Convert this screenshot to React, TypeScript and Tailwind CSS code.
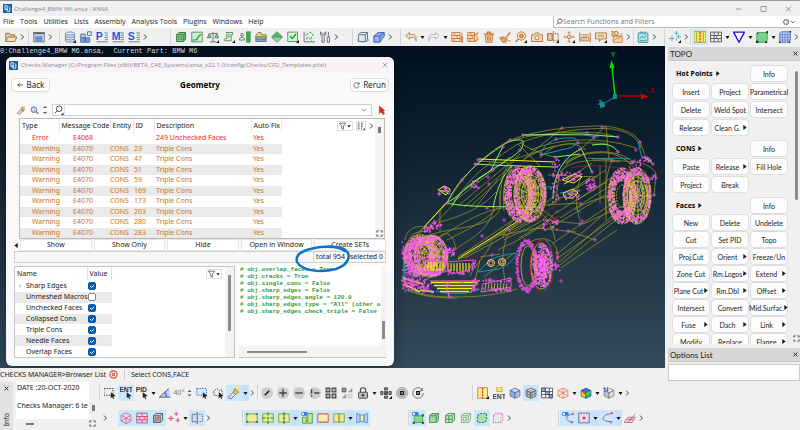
import type { ReactNode } from "react";

// ---------- small building blocks ----------

const Svg = ({ children }: { children: ReactNode }) => (
  <svg viewBox="0 0 16 16" className="block size-3" fill="none" stroke="#666" strokeWidth="1.2">
    {children}
  </svg>
);

const cubeFaces = (top: string, left: string, right: string, line = "#56657c") => (
  <g stroke={line} strokeWidth="1">
    <path d="M1.5 4.500l6.500-3 6.500 3L8 8z" fill={top} />
    <path d="M1.500 4.500L8 8v7l-6.500-3z" fill={left} />
    <path d="M14.500 4.500L8 8v7l6.500-3z" fill={right} />
  </g>
);

const softBox = (fill: string, line: string, extra?: ReactNode) => (
  <g stroke={line} strokeWidth="1.2">
    <path d="M2 5l3-3h9v9l-3 3H2z" fill={fill} />
    <path d="M2 5h9v9M11 5l3-3" />
    {extra}
  </g>
);

const yellowPlate = (extra?: ReactNode) => (
  <g>
    <rect x="1" y="2.500" width="14" height="11" fill="#f0ea94" stroke="#7fae55" strokeWidth="1.400" />
    {extra}
  </g>
);

const corner = <path d="M16 16h-4l4-4z" fill="#111" stroke="none" />;

const toggle = (
  <g stroke="none">
    <rect x="0" y="0" width="9" height="5" rx="2.500" fill="#2f7af0" />
    <circle cx="2.700" cy="2.500" r="1.500" fill="#fff" />
  </g>
);

const pointer = <path d="M9 7l6.500 5-3 .5 1 3-1.500.5-1-3-2 2z" fill="#222" stroke="none" />;

const letter = (text: string, color: string) => (
  <g>
    <text x="-.5" y="12" fontSize="14" fontWeight="900" fontFamily="Liberation Sans, sans-serif" fill={color} stroke="none">
      {text}
    </text>
    <path d="M11 2.500h5M12 5.500h4M11 8.500h5M12 11.500h4M1 14.500h15" stroke="#777" />
  </g>
);

const disc = (extra: ReactNode) => (
  <g>
    <circle cx="8" cy="8" r="8" fill="#cdcdcd" stroke="none" />
    {extra}
  </g>
);

const glyphs: Record<string, ReactNode> = {
  folder: (
    <g stroke="#94703f">
      <path d="M1 14V3h5l1.500 2H13v3" fill="#e9c79a" />
      <path d="M1 14l3-6h12l-3 6z" fill="#f7dfbd" />
    </g>
  ),
  sheet: (
    <g>
      <rect x="1" y="2" width="14" height="12.500" fill="#e8eefb" />
      <path d="M1 3.500h14" strokeWidth="2" />
      <path d="M5 7h7v6H5z" fill="#7ba1ee" stroke="#4a74c4" />
      <path d="M5 10h7M3 6v8" stroke="#4a74c4" />
    </g>
  ),
  database: (
    <g stroke="#6a7d9f">
      <path d="M2 3v10c0 2.500 12 2.500 12 0V3" fill="#dbe7fa" />
      <ellipse cx="8" cy="3.300" rx="6" ry="2" fill="#f3f7ff" />
      <path d="M2 6.500c0 2.500 12 2.500 12 0M2 10c0 2.500 12 2.500 12 0" />
      {corner}
    </g>
  ),
  blocks: (
    <g stroke="#5a6c90">
      <path d="M10 1h5v5h-5z" fill="#dfe8fa" />
      <path d="M1 4h6v5H1z" fill="#b5ccf8" />
      <path d="M1 9h6v6H1zM7 9h6v6H7z" fill="#6f9bf2" />
    </g>
  ),
  p: letter("P", "#2855e0"),
  m: letter("M", "#2855e0"),
  s: letter("S", "#2855e0"),
  mesh: softBox("#a7e3a7", "#2a7a3a", <path d="M5 5v9M8 5v9M2 8h9M2 11h9M5 5l3-3M8 5l3-3M12.500 4v9" strokeWidth=".8" />),
  curve: (
    <g>
      <rect x="1" y="1.500" width="14" height="13" fill="#c9efd0" stroke="#5a8a64" />
      <path d="M2 12h4c4 0 2-7 8-7" stroke="#13963a" strokeWidth="1.600" />
    </g>
  ),
  scale: (
    <g>
      <path d="M8 1v13M4 14.500h8M2 4l12-1" />
      <path d="M3 4L.5 9h5zM13 3.500L10.500 9h5z" fill="#9bdca8" stroke="#477a50" />
      {corner}
    </g>
  ),
  scroll: (
    <g stroke="#5a8a62">
      <path d="M4 2h9v3h-2v8H3c-2 0-2-3 0-3h2V3" fill="#d6f2da" />
      <path d="M6.500 5h3M6.500 7.500h3" />
      {corner}
    </g>
  ),
  people: (
    <g>
      <circle cx="4" cy="5" r="1.800" />
      <path d="M.5 12c0-5 7-5 7 0z" />
      <path d="M10 1h5v4h-5zM10 6h5v4h-5zM10 11h5v4h-5z" fill="#39b54a" stroke="#1d7a2c" strokeWidth=".8" />
    </g>
  ),
  stack: (
    <g strokeWidth="1">
      <path d="M1 6l3-4h4v3h7v3H1z" fill="#f3db62" />
      <path d="M1 8h14v3H1z" fill="#8fd49a" />
      <path d="M1 11h14v3H1z" fill="#79a7ef" />
    </g>
  ),
  diamond: (
    <g stroke="#5b9b67">
      <path d="M8 1l7 6.500H1z" fill="#4dbb66" />
      <path d="M8 15l7-6.500H1z" fill="#8fd49c" />
    </g>
  ),
  check: (
    <g>
      <rect x="1" y="1.500" width="13" height="12.500" fill="#d5f3da" stroke="#5a8a64" />
      <path d="M4 7l3 3 5-6" stroke="#0fa02f" strokeWidth="1.800" />
      {corner}
    </g>
  ),
  scatter: (
    <g>
      <path d="M1.500 1v13.500H16" />
      <path d="M3 5l9 8" stroke="#5fbe73" />
      <path d="M5 3h2v2H5zM9 1h2v2H9zM12 4h2v2h-2zM10 8h2v2h-2zM4 9h2v2H4z" fill="#2fae49" stroke="none" />
    </g>
  ),
  tools: <path d="M2 1v4l2 2v8h3V7l2-2V1L7 3v2H4V3zM12.500 1v7M11 8h3v7h-3z" fill="#eee" />,
  boxOn: (
    <g>
      <ellipse cx="8" cy="12" rx="8" ry="3.500" fill="#8eb1fa" stroke="none" />
      {softBox("#e4e8ee", "#5f6f88")}
    </g>
  ),
  prism: (
    <g stroke="#44609c">
      <path d="M1 7l6-5h8v5l-6 8H1z" fill="#7fa6f4" />
      <path d="M1 7h8v8M9 7l6-5" fill="#a3bff7" />
    </g>
  ),
  undo: <path d="M1 6l5-4v2.500h4c5 0 5 4 5 9-2-5-3-5-5-5H6V11z" fill="#f6dfbd" stroke="#a98350" />,
  redo: <path d="M15 6l-5-4v2.500H6c-5 0-5 4-5 9 2-5 3-5 5-5h4V11z" fill="#e9e9e9" stroke="#b4b4b4" />,
  wall: (
    <g stroke="#c47c3a">
      <path d="M1 2h11v12H1z" fill="#fbe3c8" />
      <path d="M1 6h11M1 10h11M5 2v4M8 6v4M4 10v4" />
      <path d="M14.500 2v6M13.500 8h2v7h-2z" fill="#f1a050" />
    </g>
  ),
  wallCheck: (
    <g stroke="#c47c3a">
      <path d="M1 2h9v12H1z" fill="#fbe3c8" />
      <path d="M1 6h9M1 10h9M5 2v4M7 6v4M4 10v4" />
      <path d="M9 4l2 2 4-4M9 12l2 2 4-4M12 8h3" stroke="#ee7a12" strokeWidth="1.600" />
    </g>
  ),
  trash: (
    <g stroke="#bf6f2c">
      <path d="M3 5h10l-1 10H4z" fill="#f7cfa4" />
      <path d="M1 4h14M6 4V1.500h4V4M6.500 7v6M9.500 7v6" strokeWidth="1.500" />
    </g>
  ),
  broom: (
    <g stroke="#b8702f">
      <path d="M15 2l-5 6" strokeWidth="1.600" />
      <path d="M1 9l5-1 5 2-2 5H5z" fill="#f6b878" />
      <path d="M3 12l4-3M6 14l3-4M12 13h3" />
    </g>
  ),
  magnify: (
    <g stroke="#b07840">
      <circle cx="8.500" cy="6.500" r="5.500" fill="#fde4c4" />
      <circle cx="8.500" cy="6.500" r="2.500" fill="#f09a3a" />
      <path d="M4.500 10.500L1 14.500" strokeWidth="2" />
      {corner}
    </g>
  ),
  camera: (
    <g stroke="#a47440">
      <path d="M.7 5h4l1-2.500h4.600l1 2.500h4v9H.7z" fill="#f8dcb8" />
      <circle cx="8" cy="9" r="2.800" fill="#fff3e0" />
    </g>
  ),
  split: (
    <g stroke="#8b6a44">
      <path d="M.7 3.500H7v9H.7z" fill="#f5c48e" />
      <path d="M8.500 0v15" stroke="#e07820" />
      <path d="M10 3.500h5v9h-5" strokeDasharray="2 1" />
      {corner}
    </g>
  ),
  move: (
    <g stroke="#d87a28">
      <circle cx="8" cy="8" r="2.500" fill="#fbe0bd" stroke="#777" />
      <path d="M8 1v4M8 11v4M1 8h4M11 8h4M6 3l2-2 2 2M6 13l2 2 2-2M3 6L1 8l2 2M13 6l2 2-2 2" />
      {corner}
    </g>
  ),
  ruler: (
    <g stroke="#b8824f">
      <path d="M1 2v13M15 2v13M3 5h10" strokeWidth="1.500" />
      <path d="M3 8h10v5H3z" fill="#f7d5aa" />
      <path d="M6 8v2M8 8v3M10 8v2" />
    </g>
  ),
  note: (
    <g stroke="#a4784a">
      <path d="M.7 2.500h14.600v8H8l-2 3.500v-3.500H.7z" fill="#f9dcb5" />
      <path d="M4 6.500h8" strokeDasharray="2 1" strokeWidth="1.600" />
      {corner}
    </g>
  ),
  threeD: (
    <g stroke="#c47a30">
      <path d="M3 7h12v8H3z" fill="#f8dcb6" />
      <path d="M4 13l4-4 2 2 5-8" />
      <text x="-1" y="7" fontSize="9" fontWeight="700" fontFamily="Liberation Sans, sans-serif" fill="#c0711f" stroke="none">
        3D
      </text>
    </g>
  ),
  clipboard: (
    <g stroke="#3c8c94">
      <rect x="1.500" y="2.500" width="13" height="13" rx="1" fill="#a6e4e8" />
      <path d="M5 .5v3M8 .5v3M11 .5v3M4 10l3-3 2 2 3-3M4 13h8" />
    </g>
  ),
  points: (
    <g stroke="#2ca3a8" strokeDasharray="3 1">
      <path d="M4 6v8M0 10h8M10 0v6M7 3h6M13 5v5M10 8h6M10 10v4" />
      {corner}
    </g>
  ),
  yellowSplit: (
    <g>
      <rect x="0" y="1" width="16" height="14" fill="#f2f06c" stroke="#b88a3a" />
      <path d="M8 1v14" stroke="#c33" strokeDasharray="3 1" strokeWidth="1.500" />
      <path d="M3.500 2v12M12.500 2v12" stroke="#79b23b" />
    </g>
  ),
  table: <path d="M.7 1.500h14.600v13H.7zM.7 6h14.600M.7 10h14.600M5.500 1.500v13M11 1.500V6M8.500 6v4M11 10v4.500" stroke="#555" />,
  triangle: <path d="M.8 1.500h14.400L8 15z" fill="#fff" stroke="#1515e8" strokeWidth="1.800" />,
  greenQuad: (
    <g>
      <path d="M3 2h12v11l-2 2H1V4z" fill="#7ccf8b" stroke="#4d9a5c" />
      <path d="M0 13h3v3H0zM14 0h2v3h-2zM1 2h2v2H1zM12 14h3v2h-3z" fill="#222" stroke="none" />
    </g>
  ),
  blueMesh: (
    <g stroke="#4a6fbe">
      <path d="M3 1h12v12l-2 2H1V3z" fill="#c0d4fa" />
      <path d="M4.500 2v13M8 2v13M11.500 2v13M1 5h14M1 8.500h14M1 12h14" strokeWidth=".8" />
      <path d="M0 14h2v2H0zM14 0h2v2h-2zM13 14h2v2h-2z" fill="#222" stroke="none" />
    </g>
  ),
  pick: (
    <g>
      <rect x="0" y="2" width="12" height="9" strokeDasharray="2 1.500" stroke="#333" />
      {pointer}
    </g>
  ),
  pickBlue: (
    <g>
      <rect x="1" y="2" width="13" height="9" fill="#dbe9ff" strokeDasharray="2 1.500" stroke="#2b62c9" />
      {pointer}
    </g>
  ),
  lasso: (
    <g>
      <path d="M2 6l4-4 4 3 3-2 1 6-5 3-6-1z" strokeDasharray="2 1.200" stroke="#444" />
      {pointer}
    </g>
  ),
  ent: (
    <g>
      <text x="-1" y="6" fontSize="9" fontWeight="700" fontFamily="Liberation Sans, sans-serif" fill="#333" stroke="none">
        ENT
      </text>
      {pointer}
    </g>
  ),
  pid: (
    <g>
      <text x="-.5" y="6" fontSize="9" fontWeight="700" fontFamily="Liberation Sans, sans-serif" fill="#333" stroke="none">
        PID
      </text>
      {pointer}
    </g>
  ),
  angle: (
    <g>
      <path d="M1 13L14 2v11z" fill="#b9d0fb" stroke="none" />
      <path d="M0 13.500h15M1 13L13 2" stroke="#444" />
      <path d="M10 13c0-4-1-5-3-6" stroke="#2b62e9" strokeWidth="1.500" />
    </g>
  ),
  flashlight: (
    <g>
      <path d="M0 14l7-7 3 3-6 6z" fill="#d9e2ee" stroke="#666" />
      <path d="M7 7l2-5 5 5-4 3z" fill="#e9c84e" stroke="#777" />
      <path d="M9 0l7 0v7z" fill="#ffe94a" stroke="none" />
    </g>
  ),
  dotPen: disc(<path d="M5 11l6-6" stroke="#222" strokeWidth="2.200" />),
  dotPlus: disc(<path d="M3 8h10M8 3v10" stroke="#444" strokeWidth="1.800" />),
  dotMinus: disc(<path d="M3 8h10" stroke="#444" strokeWidth="1.800" />),
  dotNot: disc(<path d="M7 8h7M3.500 3v6M3.500 11v2" stroke="#444" strokeWidth="1.800" />),
  quads: <path d="M1.500 1.500h5v5h-5zM9.500 1.500h5v5h-5zM1.500 9.500h5v5h-5zM9.500 9.500h5v5h-5z" fill="#bbb" stroke="#444" strokeWidth="1.500" />,
  quadsHalf: (
    <g>
      <path d="M1.500 1.500h5v5h-5z" fill="#999" stroke="#555" />
      <path d="M9 7l6-6v6zM1 15l6-6v6z" fill="#999" stroke="none" />
      <path d="M9.500 9.500h5v5h-5z" fill="#ddd" stroke="#ccc" />
    </g>
  ),
  lock: (
    <g stroke="#444">
      <path d="M4.500 7V4c0-4 7-4 7 0v3" strokeWidth="1.500" />
      <rect x="2" y="7" width="12" height="8" rx="1" fill="#bbb" />
      <circle cx="8" cy="11" r="1.300" fill="#222" />
    </g>
  ),
  cross: (
    <g stroke="#444">
      <path d="M6 6h4v4H6z" fill="#555" />
      <path d="M6 1h4v3H6zM6 12h4v3H6zM1 6h3v4H1zM12 6h3v4h-3z" fill="#999" />
      {corner}
    </g>
  ),
  target: (
    <g>
      <circle cx="8" cy="8" r="7.500" fill="#c8ccd1" stroke="#a4a9af" />
      <circle cx="8" cy="8" r="4.800" stroke="#8c9299" />
      <path d="M6.200 6.200h3.600v3.600H6.200z" fill="#ddd" stroke="#111" strokeWidth="1.600" />
    </g>
  ),
  turn: (
    <g>
      <circle cx="8" cy="8" r="7" stroke="#666" strokeDasharray="38 6" />
      <path d="M6.200 6.200h3.600v3.600H6.200z" stroke="#111" strokeWidth="1.600" />
      <path d="M13.500 1v4h-3" stroke="#444" />
    </g>
  ),
  yellowCorner: (
    <g>
      <rect x="1" y="1" width="13" height="14" fill="#fdee86" stroke="#b87f50" />
      <path d="M7.500 1v14" stroke="#d22" strokeDasharray="3 1" strokeWidth="1.300" />
      {corner}
    </g>
  ),
  entPlate: (
    <g>
      <rect x="5" y="0" width="7" height="6" fill="#f5e47a" stroke="#c7a93a" />
      <text x="-1" y="16" fontSize="9" fontWeight="700" fontFamily="Liberation Sans, sans-serif" fill="#444" stroke="none">
        ENT
      </text>
    </g>
  ),
  cubeBlue: cubeFaces("#c3d5f8", "#8fb0f0", "#abc4f6"),
  cubeMesh: (
    <g>
      {cubeFaces("#fff", "#dbe6f5", "#eef3fa", "#444")}
      <path d="M4.500 3l6.500 3.500M11.500 3L5 6.500M3.500 5.500v7.500M5.800 6.800v7M10.200 6.800v7M12.500 5.500V13M1.500 8.500l6.500 3 6.500-3" stroke="#555" strokeWidth=".8" />
    </g>
  ),
  meshBlue: (
    <g stroke="#555">
      <path d="M.7 1.500h14.600v13H.7z" fill="#fff" />
      <path d="M.7 1.500h5v4.500h-5zM6 6h5v4H6zM11 10h4v4.500h-4z" fill="#85a8ec" />
      <path d="M.7 6h14.600M.7 10h14.600M6 1.500v13M11 1.500v13" />
    </g>
  ),
  wireRed: (
    <path
      d="M1.500 4.500l6.500-3 6.500 3L8 8zM1.500 4.500v7.500L8 15V8M14.500 4.500V12L8 15M1.500 12L8 8l6.500 4M8 1.500V8"
      stroke="#e8705c"
      strokeWidth="1"
    />
  ),
  rainbow: (
    <g>
      {cubeFaces("#2a6ff0", "#f5d21e", "#1fb07a", "#2c4f8a")}
      <path d="M1.500 4.500L8 8v4z" fill="#ef3b24" stroke="none" />
      <path d="M14.500 4.500L8 8l1 6z" fill="#48d64c" stroke="none" />
    </g>
  ),
  cubeGray: (
    <g>
      {cubeFaces("#f2f2f2", "#c4c4c4", "#ddd", "#777")}
      <path d="M2 0v7M6 0v6M0 2h4M4 5h4" stroke="#3a6fe0" />
    </g>
  ),
  pinkCube: (
    <g stroke="#8d6d9a" strokeWidth="1">
      <path d="M1.500 4.500l6.500-3.500 6.500 3.500v7.500L8 15.500 1.500 12z" fill="#f1d3e6" />
      <path d="M1.500 4.500L8 8l6.500-3.500M8 8v7.500M1.500 12L8 8l6.500 4" stroke="#cf5a90" />
    </g>
  ),
  pinkGrid: (
    <g stroke="#7b6884">
      <path d="M1 1.500h14v13H1z" fill="#f4d6e6" />
      <path d="M1 6h14M1 10.500h14M8 1.500V6M5 6v4.500M11 6v4.500M8 10.500v4" stroke="#d8437a" />
    </g>
  ),
  pinkMesh: (
    <g>
      {softBox("#e8d8e6", "#555", <path d="M5 5v9M8 5v9M2 8h9M2 11h9" strokeWidth=".8" />)}
      <path d="M3 13l7-7" stroke="#e0467e" />
    </g>
  ),
  pinkPlus: <path d="M4 5v7M.5 8.500h7M11 0v5M8.500 2.500h5M13 8v6M10 11h6" stroke="#e84e88" strokeWidth="1.500" />,
  halfBox: (
    <g>
      <path d="M8 3H1.500v10H8" fill="#cfdcf5" stroke="#5b6b8c" />
      <path d="M8.500 0v16" stroke="#e8487f" strokeWidth="1.500" />
      <path d="M10.500 3H15v10h-4.500" strokeDasharray="2 1.200" />
    </g>
  ),
  plate: yellowPlate(<path d="M0 1.500h3v2.500H0zM13 1.500h3v2.500h-3zM0 12h3v2.500H0zM13 12h3v2.500h-3z" fill="#398c3c" stroke="none" />),
  platePlus: yellowPlate(<path d="M8 0v5M8 11v5M0 8h5M11 8h5M6.500 8h3M8 6.500v3" stroke="#2d9b35" strokeWidth="1.500" />),
  plateDots: yellowPlate(<path d="M8 0v16M6.500 2.500h3M6.500 8h3M6.500 13.500h3" stroke="#3a7a36" />),
  plateToggle: (
    <g>
      <path d="M2 7h5v8H2zM9 2h6v13H9z" fill="#c9e98a" stroke="#4e9a3a" />
      {toggle}
    </g>
  ),
  plateRed: <rect x="1" y="2.500" width="14" height="11" rx="1" fill="#f6efb4" stroke="#dd6050" strokeWidth="1.500" />,
  plateSplit: yellowPlate(<path d="M8 2v12" stroke="#7b7b2a" strokeWidth="1.500" />),
  plateBlue: (
    <g stroke="#5b86cc">
      <path d="M1 1.500L5.500 4v9L1 14.500zM15 1.500L10.500 4v9l4.500 1.500z" fill="#bcd4f8" />
      <path d="M5.500 4h5v9h-5z" fill="#f4ec9a" />
    </g>
  ),
  greenToggle: (
    <g>
      <path d="M3 5h11v9H3z" fill="#8ad39a" stroke="#3f9858" />
      <path d="M1 13h3v3H1zM13 13h3v3h-3zM13 3h3v3h-3z" fill="#1e7a36" stroke="none" />
      {toggle}
    </g>
  ),
  greenBox: softBox("#9bd6a6", "#4d8d5a"),
  greenBoxGrid: softBox("#c6ebcc", "#4d8d5a", <path d="M6.500 5v9M2 9.500h9" stroke="#1f9a38" />),
  greenBoxLine: softBox("#e0f2e3", "#7daa86", <path d="M4.500 7.500h4v4h-4z" />),
  greenDash: <path d="M2 5l3-3h9v9l-3 3H2z" fill="#a6dfb0" stroke="#3a8c50" strokeDasharray="3 1.500" strokeWidth="1.600" />,
  pinkDash: <path d="M2 5l3-3h9v9l-3 3H2z" fill="#dff3dd" stroke="#e86fd8" strokeDasharray="2 1.500" strokeWidth="1.800" />,
  arcToggle: (
    <g>
      <path d="M14 3C6 4 2 9 11 13" stroke="#7d6a9a" />
      <path d="M11 12h4v3h-4zM13 1h3v3h-3z" fill="#d86a94" stroke="none" />
      {toggle}
    </g>
  ),
  pinBox: (
    <g>
      <rect x="1" y="1.500" width="14" height="13" fill="#e6d8ea" stroke="#6c7088" />
      <circle cx="8" cy="8" r="1.800" fill="#d8285a" stroke="none" />
    </g>
  ),
  arc: (
    <g>
      <path d="M14 2C4 3-1 9 6 12l8 1" stroke="#7d5f8a" />
      <path d="M13 0h3v3h-3zM12 12h3v3h-3z" fill="#e0608a" stroke="none" />
    </g>
  ),
  slant: <path d="M0 14l5-7h10l-4 7zM5 14l5-7M3 10h10M15 2L8 12" fill="#f8dbe2" stroke="#b86078" strokeWidth="1" />,
};

const Chevron = () => (
  <svg viewBox="0 0 7 14" className="block h-[14px] w-[7px] shrink-0" fill="none" stroke="#444">
    <path d="M2 4.500l2.500 2.500L2 9.500" />
  </svg>
);

const Drop = () => (
  <svg viewBox="0 0 7 14" className="block h-[14px] w-[7px] shrink-0">
    <path d="M1.500 6h4l-2 3z" fill="#111" />
  </svg>
);

// "names" takes glyph names, ">" for the overflow mark, "v" for a menu arrow; a leading * marks an active tool
const Tools = ({ names }: { names: string }) => (
  <>
    {names.split(" ").map((raw, i) => {
      if (raw === ">") return <Chevron key={i} />;
      if (raw === "v") return <Drop key={i} />;
      if (raw === "*v")
        return (
          <span key={i} className="flex h-4 items-center bg-[#c5e1f7]">
            <Drop />
          </span>
        );
      const active = raw.startsWith("*");
      const name = active ? raw.slice(1) : raw;
      return (
        <button
          key={i}
          type="button"
          aria-label={name}
          className={`flex size-4 shrink-0 items-center justify-center ${active ? "bg-[#cce6fa]" : ""}`}
        >
          <Svg>{glyphs[name]}</Svg>
        </button>
      );
    })}
  </>
);

const Separator = ({ className = "" }: { className?: string }) => (
  <span className={`h-4 w-px shrink-0 bg-[#d4d4d4] ${className}`} />
);

const AnsaLogo = () => (
  <svg viewBox="0 0 16 16" className="size-[9px] shrink-0">
    <rect width="16" height="16" fill="#1261b0" />
    <path d="M3.500 3v7h4V3zM7.500 7v6H12V6l-2-2" fill="none" stroke="#fff" strokeWidth="1.500" />
  </svg>
);

const Corners = () => (
  <svg viewBox="0 0 8 8" className="block size-[7px]" fill="none" stroke="#444">
    <path d="M1 3V1h2M5 1h2v2M7 5v2H5M3 7H1V5" />
  </svg>
);

const Funnel = () => (
  <svg viewBox="0 0 16 10" className="block h-[10px] w-4 rounded-[1px] border border-[#ddd] bg-white" fill="none" stroke="#555">
    <path d="M1 1.500h8L6 5v4L4 8V5z" />
    <path d="M11 4h4l-2 3z" fill="#111" stroke="none" />
  </svg>
);

const Arrow = ({ className = "" }: { className?: string }) => (
  <svg viewBox="0 0 4 6" className={`h-[5px] w-1 shrink-0 ${className}`}>
    <path d="M0 0v6l4-3z" fill="#111" />
  </svg>
);

// ---------- 3D view ----------

const makeRandom = (seed: number) => {
  let s = seed;
  return () => {
    s = (s * 16807) % 2147483647;
    return s / 2147483647;
  };
};

const plus = (x: number, y: number, r: number) =>
  `M${(x - r).toFixed(1)} ${y.toFixed(1)}h${2 * r}M${x.toFixed(1)} ${(y - r).toFixed(1)}v${2 * r}`;

// random points in the ring between two ellipses
const ringMarks = (cx: number, cy: number, rx: number, ry: number, inner: number, count: number, seed: number) => {
  const rnd = makeRandom(seed);
  let d = "";
  for (let i = 0; i < count; i++) {
    const a = rnd() * Math.PI * 2;
    const k = inner + (1 - inner) * rnd();
    d += plus(cx + Math.cos(a) * rx * k, cy + Math.sin(a) * ry * k, 1);
  }
  return d;
};

type WheelProps = { cx: number; cy: number; rx: number; ry: number; seed: number; depth: number };

const Wheel = ({ cx, cy, rx, ry, seed, depth }: WheelProps) => {
  const spokes = Array.from({ length: 13 }, (_, i) => {
    const a = (i / 13) * Math.PI * 2;
    return `M${cx} ${cy}L${(cx + Math.cos(a) * rx * 0.75).toFixed(1)} ${(cy + Math.sin(a) * ry * 0.75).toFixed(1)}`;
  }).join("");
  return (
    <g fill="none">
      <path d={ringMarks(cx - depth, cy, rx, ry, 0.55, 420, seed)} stroke="#f563e6" strokeWidth=".8" />
      {[1, 0.9, 0.8, 0.68, 0.55, 0.4].map((k) => (
        <g key={k} stroke="#e6e11e" strokeWidth=".6">
          <ellipse cx={cx} cy={cy} rx={rx * k} ry={ry * k} />
          <ellipse cx={cx - depth} cy={cy} rx={rx * k} ry={ry * k} strokeDasharray="2 1" />
        </g>
      ))}
      <path d={spokes} stroke="#d8d820" strokeWidth=".7" />
      <path d={ringMarks(cx, cy, rx, ry, 0.75, 240, seed + 7)} stroke="#ff6af2" strokeWidth=".7" />
      <path d={ringMarks(cx, cy, rx * 0.6, ry * 0.6, 0, 70, seed + 13)} stroke="#f08ac0" strokeWidth=".5" />
      {[0.95, 0.72, 0.5].map((k) => (
        <ellipse key={k} cx={cx} cy={cy} rx={rx * k} ry={ry * k} stroke="#e4df22" strokeWidth=".8" strokeDasharray="3 1.500" />
      ))}
    </g>
  );
};

const bodyLines = [
  "M447 203C462 178 478 158 510 140C540 129 575 126 602 126C622 127 636 134 640 142",
  "M452 204C468 180 486 163 520 143C550 131 590 127 612 129C628 131 638 138 641 148",
  "M506 143C530 133 565 131 600 133L618 137M606 126l-24 22M606 126l3 34M562 128l-38 31",
  "M447 203L424 227C414 236 406 246 403 252M452 206L430 229M440 210v22M447 203C430 220 416 236 409 250",
  "M456 200l54-43M458 206l62-52M464 207l48-42M470 207l34-32M476 207l22-28",
  "M460 256l56-38M462 258l60-36M465 258l66-36M452 252c14-12 36-18 42-44M447 240c20-10 40-20 50-32",
  "M430 235c20-8 62-6 70-26v-18M458 257c50-26 60-34 98-62M440 236c8-6 14 0 16 14",
  "M405 240c2-12 12-16 24-12M407 246c2-12 10-16 20-14M404 250c3-12 12-18 22-14",
  "M556 255l61-52M559 262l60-52M560 265l62-50M558 258l62-44M561 268l56-38M553 243l63-42M545 231l60-36",
  "M560 218l65-42M556 213l60-38M548 206l58-36M553 221l30 3 40-18M568 231l28 9M536 228l40 4M512 230l30-16",
  "M582 176c-6 10-8 28-2 44M600 166v38M606 160v60M612 160c-6 14-8 34-6 52M555 240c-4-20-14-30-20-28",
  "M503 238c4-16 14-22 28-24M505 280c-6-30 0-54 24-64M516 252c20-20 44-18 42 10M519 238l32-19",
  "M403 285c14 10 30 12 50 12c26 0 44-2 64-8M405 289c16 8 34 9 52 9M403 285l1-34",
  "M500 206c0-14 2-30 6-38l8-7M504 211c-2-16 0-34 8-44M508 163l-30-2M512 160l42-14M540 166l-22-22",
  "M540 158c14-16 34-18 46-8M555 205l4-28c6-14 14-22 36-24c18-2 30 4 40 16M560 172c12-14 36-12 60-10",
  "M562 165c20-18 56-16 70-4M566 180l26-17M588 158l46 4c10 0 20 6 22 12l-2 22M640 142l6 16 7 6",
  "M484 277l30-24M470 276c4-10 16-20 22-34M480 260l-6 24M500 254l-20 3M504 240c10-6 24-12 40-12",
  "M545 205l35-2M548 175l50 2M572 190l20-14M577 200l30-18M566 163l18-9M540 208l18 13",
  "M520 143c14 8 24 12 35 14M523 160c20-14 50-20 84-16M530 150c30-12 70-14 106-2M575 210c10-8 24-12 36-14",
  "M440 222c20-6 40-12 56-30M436 240c26-18 50-30 66-32M500 235c20-2 36-8 48-20M498 250c20-10 40-18 60-40",
];

const limeLines = [
  "M447 203C456 184 472 164 508 142C516 139 523 140 523 141C524 150 518 154 491 170C478 180 466 188 456 197z",
  "M475 164C500 166 530 166 555 167M447 203c14 4 60 4 95 4M493 208c4-20 10-34 20-43M503 146l-12 24",
  "M553 199c0-18 6-40 28-50M581 148l11 24M592 145c14-2 22 0 26 7M555 157l25-3M522 135l60-1 36 3",
  "M452 206c8-14 16-22 40-36M644 157l8 6",
];

const cyanLines = [
  "M525 135h58l16 2M541 155c2-12 14-18 32-17c8 2 6 9-12 12zM638 142l4 16 10 2M592 159c14-1 26-1 38 0",
  "M478 272l12-12c8-4 18-6 27-7c-4 8-10 13-18 16zM404 250l1 34M436 291c14 4 30 4 44-2M546 240c8 6 10 40-2 50",
  "M530 187h24M560 193l18-2M441 190l8 4M577 209l4 4M638 176c6 6 6 20 2 30",
];

// little clusters of markers: x, y, half width, half height, amount
const clusters = [
  [409, 262, 7, 20, 120], [414, 286, 11, 6, 70], [430, 260, 12, 4, 30], [449, 252, 5, 4, 30], [436, 225, 6, 4, 26],
  [427, 229, 3, 3, 14], [444, 191, 6, 4, 18], [475, 184, 5, 4, 14], [551, 225, 8, 5, 30], [426, 243, 14, 6, 50],
  [570, 176, 12, 4, 34], [591, 185, 5, 6, 36], [572, 195, 8, 5, 24], [555, 188, 4, 16, 22], [646, 159, 6, 3, 16],
  [635, 166, 6, 5, 16], [652, 178, 4, 4, 10], [556, 165, 4, 6, 10], [497, 290, 14, 2, 26],
  [497, 280, 15, 2, 20], [475, 284, 3, 6, 16], [426, 286, 6, 8, 30], [557, 262, 3, 10, 14],
  [434, 273, 12, 2, 20], [460, 273, 12, 2, 20], [474, 265, 2, 5, 10],
];

const loosePoints = [
  [447, 203], [462, 180], [478, 160], [510, 140], [523, 135], [562, 128], [602, 127], [587, 133], [618, 137],
  [640, 142], [541, 155], [556, 139], [578, 143], [594, 138], [592, 172], [555, 157], [580, 149], [618, 152],
  [475, 164], [503, 147], [520, 150], [489, 184], [488, 177], [493, 170], [595, 240], [568, 231], [580, 224],
  [582, 221], [509, 230], [482, 236], [504, 220], [487, 208], [542, 207], [581, 204], [634, 161], [653, 164],
  [656, 178], [654, 195], [450, 297], [403, 250], [404, 286], [558, 266], [517, 167], [555, 167], [449, 284],
  [561, 281], [462, 282], [492, 255], [612, 160], [636, 150],
];

const clusterPath = (() => {
  const rnd = makeRandom(91);
  let d = "";
  clusters.forEach(([x, y, w, h, n]) => {
    for (let i = 0; i < n; i++) d += plus(x + (rnd() * 2 - 1) * w, y + (rnd() * 2 - 1) * h, 1);
  });
  return d;
})();

const bars = (x: number, y: number, step: number, count: number, draw: string) =>
  Array.from({ length: count }, (_, i) => `M${x + i * step} ${y}${draw}`).join("");

const CarView = () => (
  <svg viewBox="395 46 270 321" className="absolute right-0 top-0 h-full w-[270px]" preserveAspectRatio="xMaxYMin meet" fill="none">
    <g stroke="#8f9120" strokeWidth=".8">
      {bodyLines.map((d) => (
        <path key={d} d={d} />
      ))}
    </g>
    <g stroke="#a02020" strokeWidth=".8">
      <path d="M570 168c20-4 40-2 66 2M432 229l10-9M430 231l11-9M549 224l9-8M550 222l10-6M428 261l34-2M440 281h40M536 222l24-22" />
    </g>
    <g stroke="#1ba0b8" strokeWidth=".9">
      {cyanLines.map((d) => (
        <path key={d} d={d} />
      ))}
    </g>
    <g stroke="#8cf060" strokeWidth="1">
      {limeLines.map((d) => (
        <path key={d} d={d} />
      ))}
    </g>
    <path d="M478 159l77 3M458 259l60-38M424 227l22-24" stroke="#f4f01a" strokeWidth="1" />
    <path
      d="M562 180l12-6 8 3-8 6zM564 184l18-10M563 193l10-4 5 4-5 5h-8zM568 194h8M438 190l6-4 6 3-4 6zM440 191h8"
      stroke="#f4f01a"
      strokeWidth="1"
    />

    <Wheel cx={530} cy={194} rx={16} ry={28} seed={11} depth={10} />
    <Wheel cx={637} cy={196} rx={14} ry={28} seed={37} depth={15} />
    <Wheel cx={431} cy={256} rx={17} ry={21} seed={53} depth={10} />

    {/* front right wheel, with the brake parts in red */}
    <ellipse cx="527" cy="266" rx="9" ry="25" stroke="#c81f3c" />
    <ellipse cx="528" cy="266" rx="7" ry="20" stroke="#d8d820" strokeWidth=".7" />
    <ellipse cx="542" cy="266" rx="12" ry="26" stroke="#a81c1c" />
    <ellipse cx="541" cy="266" rx="10" ry="23" stroke="#e0dc20" strokeWidth=".7" />
    <path d={ringMarks(527, 266, 11, 27, 0.8, 230, 71)} stroke="#d352d8" strokeWidth=".7" />
    <path d={ringMarks(542, 266, 11, 22, 0.1, 320, 83)} stroke="#ff66f0" strokeWidth=".8" />
    <ellipse cx="542" cy="266" rx="6" ry="13" stroke="#e0a030" strokeWidth=".7" />

    {/* kidneys, air intake, fog lamp */}
    <path d={bars(425, 262, 3, 7, "v9")} stroke="#ece81a" strokeWidth="1.200" />
    <path d={bars(448, 263, 3, 8, "v8")} stroke="#ece81a" strokeWidth="1.200" />
    <path d="M423 261h23l-1 11h-18zM446 262l28-2-5 10-18 4z" stroke="#f04fc0" />
    <path d={[0, 3, 6, 9].map((n) => `M${431 + n} ${282.5 + n}h${47 - n * 2}`).join("")} stroke="#f6f210" strokeWidth="1.400" />
    <path d="M446 282l3 15M479 280l-9 13M430 281h50" stroke="#f070b8" strokeWidth="1.200" />
    <path d="M483 284l28-6v9l-30 5z" stroke="#f050e0" />
    <path d={bars(486, 283, 3, 8, "l-1 7")} stroke="#d6c83a" strokeWidth=".8" />
    <path d="M420 290l14 2M403 278l20 6M404 284l16 8" stroke="#f2ee14" strokeWidth="1.500" />
    <circle cx="491" cy="263" r="3.500" stroke="#f0e83a" />
    <circle cx="502" cy="262" r="3.500" stroke="#f0e83a" />
    <circle cx="491" cy="263" r="2" stroke="#f06ad8" />
    <circle cx="502" cy="262" r="2" stroke="#f06ad8" />

    <path d={clusterPath} stroke="#f35ce6" strokeWidth=".7" />
    <path d={loosePoints.map(([x, y]) => plus(x, y, 2)).join("")} stroke="#d84fd8" strokeWidth=".8" />

    {/* axes */}
    <path d="M615 96l-3-29" stroke="#00e000" strokeWidth="1.500" />
    <path d="M609.500 68l2-8 3 8z" fill="#00e000" />
    <path d="M616 96h26" stroke="#b00000" strokeWidth="1.500" />
    <path d="M641 93.500l8 3-8 3z" fill="#d00000" />
    <path d="M615 97l-12 7" stroke="#0d8c8c" />
    <path d="M613 94h4v5h-4zM600 102l4 0 1 5-5 1z" fill="#109090" />
    <g fontSize="7" fontFamily="Liberation Mono, monospace" fontWeight="700">
      <text x="611" y="57" fill="#00a800">Y</text>
      <text x="650" y="93" fill="#900000">X</text>
      <text x="598" y="105" fill="#109090">Z</text>
    </g>
  </svg>
);

// ---------- Checks Manager ----------

const results = [
  ["Error", "E4068", "", "", "249 Unchecked Faces"],
  ...["23", "47", "51", "59", "169", "173", "203", "280", "283"].map((id) => ["Warning", "E4070", "CONS", id, "Triple Cons"]),
];

const options = ["Sharp Edges", "Unmeshed Macros", "Unchecked Faces", "Collapsed Cons", "Triple Cons", "Needle Faces", "Overlap Faces"];

const script = `# obj.overlap_faces = True
# obj.cracks = True
# obj.single_cons = False
# obj.sharp_edges = False
# obj.sharp_edges_angle = 120.0
# obj.sharp_edges_type = "All" (other o
# obj.sharp_edges_check_triple = False`;

const ChecksManager = () => (
  <section className="relative z-10 ml-1.5 flex h-[309px] w-[388px] flex-col rounded-md bg-[#f9f9f9] text-[#222] shadow-[0_4px_14px_rgba(0,0,0,0.35)]">
    <header className="flex h-4 shrink-0 items-center gap-[3px] rounded-t-md bg-[#f7f3f6] pl-[3px] pr-1.5 text-[#8a8a8a]">
      <AnsaLogo />
      <h2 className="flex-1 whitespace-nowrap font-['Open_Sans',sans-serif] text-[6px]">
        Checks Manager (C:/Program Files (x86)/BETA_CAE_Systems/ansa_v22.1.0/config/Checks/CFD_Templates.plist)
      </h2>
      <button type="button" aria-label="Close" className="size-[6px]">
        <svg viewBox="0 0 8 8" stroke="#888">
          <path d="M1 1l6 6M7 1L1 7" />
        </svg>
      </button>
    </header>

    <div className="mt-[5px] flex h-[14px] shrink-0 items-center justify-between px-[5px] text-[8px]">
      <button type="button" className="flex h-[14px] w-[39px] items-center justify-center gap-1 rounded-sm border border-[#dcdcdc] bg-white">
        <svg viewBox="0 0 8 8" className="size-[6px]" fill="none" stroke="#333">
          <path d="M8 4H1M4 1L1 4l3 3" />
        </svg>
        Back
      </button>
      <h3 className="font-bold text-black">Geometry</h3>
      <button type="button" className="flex h-[14px] w-[39px] items-center justify-center gap-[3px] rounded-sm border border-[#dcdcdc] bg-white">
        <svg viewBox="0 0 8 8" className="size-[7px] shrink-0" fill="none" stroke="#555">
          <path d="M6.500 2A3 3 0 107 4.500M7 .5V2.500H5" />
        </svg>
        Rerun
      </button>
    </div>

    <div className="mt-3 flex h-3 shrink-0 items-center gap-1 pl-2.5 pr-2">
      <svg viewBox="0 0 16 16" className="size-[10px]" stroke="#555">
        <path d="M2 13l6-6 3 3-6 5z" fill="#ddd" />
        <path d="M8 6l2-3 4 4-3 3z" fill="#bbb" />
        <path d="M10 1l5 1-1 5z" fill="#ffe228" stroke="none" />
      </svg>
      <svg viewBox="0 0 16 16" className="size-[9px]" fill="none" stroke="#666" strokeWidth="1.500">
        <circle cx="7" cy="6.500" r="5" fill="#c5d8f7" />
        <path d="M11 10l4 4" strokeWidth="2" />
      </svg>
      <svg viewBox="0 0 4 10" className="h-[10px] w-1 fill-[#555]">
        <path d="M0 3l2-2 2 2zM0 7l2 2 2-2z" />
      </svg>
      <label className="ml-px flex h-3 flex-1 items-center border border-[#d0d0d0] bg-white">
        <svg viewBox="0 0 16 16" className="h-[10px] w-3 border-r border-[#ddd]" fill="none" stroke="#444" strokeWidth="1.500">
          <circle cx="9" cy="6" r="4.500" />
          <path d="M6 9.500L2 13" />
          <path d="M16 16h-4l4-4z" fill="#111" stroke="none" />
        </svg>
        <input aria-label="Filter results" className="min-w-0 flex-1 bg-transparent px-1 outline-none" />
        <svg viewBox="0 0 8 8" className="mr-1 size-[6px]" fill="none" stroke="#777">
          <path d="M1 2.500l3 3 3-3" />
        </svg>
      </label>
      <svg viewBox="0 0 8 10" className="ml-0.5 h-[9px] w-2">
        <path d="M1 0l6 5-2 .5 2 3-2 1-2-3-2 2z" fill="#d62c1c" stroke="#8a2a20" strokeWidth=".5" />
      </svg>
    </div>

    <div className="mx-[9px] ml-[13px] mt-0.5 flex h-[121px] shrink-0 border border-[#b9b9b9] bg-white">
      <table className="h-[119px] w-[262px] table-fixed whitespace-nowrap">
        <colgroup>
          <col className="w-[39px]" />
          <col className="w-[51px]" />
          <col className="w-[23px]" />
          <col className="w-[21px]" />
          <col className="w-[97px]" />
          <col />
        </colgroup>
        <thead>
          <tr className="h-[14px] text-left">
            {["Type", "Message Code", "Entity", "ID", "Description", "Auto Fix"].map((h) => (
              <th key={h} className="border-r border-[#e8e8e8] p-0 pl-0.5 font-normal">
                {h}
              </th>
            ))}
          </tr>
        </thead>
        <tbody>
          {results.map(([type, code, entity, id, text], i) => (
            <tr key={i} className={`${i === 0 ? "text-[#fa1d1d]" : "text-[#cf7420]"} ${i % 2 ? "bg-[#eaeaea]" : ""}`}>
              <td className="p-0 pl-3">{type}</td>
              <td className="p-0 pl-[14px]">{code}</td>
              <td className="p-0">{entity}</td>
              <td className="p-0 pl-px">{id}</td>
              <td className="p-0 pl-0.5">{text}</td>
              <td className="p-0 pl-0.5">Yes</td>
            </tr>
          ))}
        </tbody>
      </table>
      <div className="ml-auto flex gap-0.5 pt-0.5">
        <Funnel />
        <svg viewBox="0 0 10 10" className="ml-px size-[10px] border border-[#ddd]" fill="#666">
          <path d="M1 1h2v2H1zM5 1h2v2H5zM1 4h2v2H1zM5 4h2v2H5zM1 7h2v2H1zM5 7h1v2H5zM10 10H7l3-3z" />
        </svg>
        <span className="-mt-0.5">
          <Chevron />
        </span>
      </div>
      <div className="flex w-[9px] flex-col items-center justify-between bg-[#f3f3f3] pb-px pt-2">
        <span className="h-[6px] w-[3px] bg-[#777]" />
        <Corners />
      </div>
    </div>

    <div className="flex h-3 shrink-0 items-center pl-2 pr-2">
      <svg viewBox="0 0 4 6" className="h-[5px] w-1">
        <path d="M4 0v6L0 3z" fill="#111" />
      </svg>
      <div className="ml-0.5 grid flex-1 grid-cols-5 gap-0.5">
        {["Show", "Show Only", "Hide", "Open in Window", "Create SETs"].map((b) => (
          <button key={b} type="button" className="h-3 border border-[#e6e6e6] bg-white">
            {b}
          </button>
        ))}
      </div>
    </div>

    <div className="ml-2 mr-2 flex h-3 shrink-0 items-center justify-end border border-[#cfcfcf] bg-[#f7f7f7]">
      <span className="relative border-x border-[#d5d5d5] px-0.5">
        total 954
        <svg viewBox="0 0 58 30" className="absolute -left-5 -top-2 h-[30px] w-[58px]" fill="none" stroke="#0d74cc" strokeWidth="2.500" strokeLinecap="round">
          <path d="M10 7C22 2 40 1 50 5C58 10 56 20 42 25C26 29 8 27 3 18C1 10 8 6 26 3C38 2 46 3 51 7" />
        </svg>
      </span>
      <span className="px-0.5">selected 0</span>
    </div>

    <div className="mx-2 mt-[3px] flex h-[92px] shrink-0 gap-1">
      <div className="flex flex-1 border border-[#c4c4c4] bg-white">
        <table className="h-[90px] w-[97px] table-fixed whitespace-nowrap">
          <colgroup>
            <col className="w-[72px]" />
            <col />
          </colgroup>
          <thead>
            <tr className="h-[14px] text-left">
              <th className="border-r border-[#e2e2e2] p-0 pl-0.5 font-normal">Name</th>
              <th className="border-r border-[#e2e2e2] p-0 pl-0.5 font-normal">Value</th>
            </tr>
          </thead>
          <tbody>
            {options.map((name, i) => (
              <tr key={name} className={i % 2 ? "bg-[#eaeaea]" : ""}>
                <td className="p-0">
                  <label htmlFor={`opt${i}`} className="flex items-center">
                    <span className="w-[11px] shrink-0 pl-1 text-[#777]">{i === 0 ? "›" : ""}</span>
                    {name}
                  </label>
                </td>
                <td className="p-0">
                  <span className="ml-px grid size-2">
                    <input
                      id={`opt${i}`}
                      type="checkbox"
                      defaultChecked={name !== "Unmeshed Macros"}
                      className="peer col-start-1 row-start-1 size-2 appearance-none rounded-[2px] border border-[#888] bg-white checked:border-[#0b5cad] checked:bg-[#0b5cad]"
                    />
                    <svg viewBox="0 0 8 8" className="invisible col-start-1 row-start-1 size-2 peer-checked:visible" fill="none" stroke="#fff">
                      <path d="M2 4l1.500 1.500L6 3" />
                    </svg>
                  </span>
                </td>
              </tr>
            ))}
          </tbody>
        </table>
        <div className="ml-auto mr-[3px] pt-0.5">
          <Funnel />
        </div>
        <div className="w-[9px] bg-[#f3f3f3] px-[3px] pt-2">
          <span className="block h-[56px] bg-[#8a8a8a]" />
        </div>
      </div>
      <div className="flex w-[147px] flex-col border-b border-[#c4c4c4]">
        <div className="flex flex-1">
          <pre className="h-[79px] flex-1 overflow-hidden bg-white pl-px font-['Liberation_Mono',monospace] text-[6px] font-bold leading-[7px] text-[#2f9a35]">
            {script}
          </pre>
          <div className="flex w-[5px] items-end justify-center bg-[#f3f3f3] pb-2">
            <span className="block h-[18px] w-[3px] bg-[#8a8a8a]" />
          </div>
        </div>
        <div className="flex h-[10px] items-center bg-[#f3f3f3] pl-2">
          <span className="block h-0.5 w-[60px] bg-[#8a8a8a]" />
        </div>
      </div>
    </div>
  </section>
);

// ---------- TOPO panel ----------

// a trailing > gives the button a submenu arrow
const topo = [
  { title: "Hot Points", gap: "gap-y-px", items: ["Insert", "Project", "Parametrical", "Delete", "Weld Spot", "Intersect", "Release", "Clean G.>"] },
  { title: "CONS", gap: "gap-y-px", items: ["Paste", "Release>", "Fill Hole", "Project", "Break"] },
  {
    title: "Faces",
    gap: "gap-y-0",
    items: [
      "New", "Delete", "Undelete", "Cut", "Set PID", "Topo", "Proj.Cut", "Orient>", "Freeze/Un", "Zone Cut", "Rm.Logos>", "Extend>",
      "Plane Cut>", "Rm.Dbl>", "Offset>", "Intersect", "Convert", "Mid.Surfac.>", "Fuse>", "Dach>", "Link>", "Modify", "Replace", "Flange>",
    ],
  },
];

const panelButton = "h-[17px] min-w-0 rounded-sm border border-[#dedede] bg-[#fdfdfd]";

const PanelHeader = ({ title }: { title: string }) => (
  <header className="flex h-[14px] shrink-0 items-center justify-between border-b border-[#c6c6c6] bg-[#d6d6d6] px-0.5">
    <h2 className="text-[8px]">{title}</h2>
    <button type="button" aria-label={`Close ${title}`} className="size-[5px]">
      <svg viewBox="0 0 8 8" stroke="#222" strokeWidth="1.500">
        <path d="M1 1l6 6M7 1L1 7" />
      </svg>
    </button>
  </header>
);

const TopoPanel = () => (
  <aside className="ml-[3px] flex w-[132px] shrink-0 flex-col pt-px font-['Lato',sans-serif]">
    <PanelHeader title="TOPO" />
    <div className="flex min-h-0 flex-1 overflow-hidden pl-1">
      <div className="flex w-[116px] flex-col gap-1 pt-1">
        {topo.map((section) => (
          <div key={section.title} className={`grid shrink-0 grid-cols-3 gap-x-px ${section.gap}`}>
            <h3 className="col-span-2 flex items-center gap-[3px] pl-1 font-['Noto_Sans',sans-serif] font-bold text-black">
              {section.title}
              <Arrow />
            </h3>
            <button type="button" className={panelButton}>
              Info
            </button>
            {section.items.map((item) => {
              const menu = item.endsWith(">");
              return (
                <button key={item} type="button" className={`flex items-center justify-center whitespace-nowrap ${panelButton}`}>
                  <span className={menu ? "flex-1" : ""}>{menu ? item.slice(0, -1) : item}</span>
                  {menu && <Arrow className="mr-px" />}
                </button>
              );
            })}
          </div>
        ))}
      </div>
      <div className="flex flex-1 flex-col items-center justify-between pb-0.5 pl-1 pt-2.5">
        <span className="h-[129px] w-[3px] rounded bg-[#8a8a8a]" />
        <Corners />
      </div>
    </div>
    <div className="mt-1 shrink-0">
      <PanelHeader title="Options List" />
      <div className="mt-0.5 h-[17px] border border-[#c8c8d2] bg-white" />
    </div>
  </aside>
);

// ---------- page ----------

const menus = ["File", "Tools", "Utilities", "Lists", "Assembly", "Analysis Tools", "Plugins", "Windows", "Help"];

const App = () => (
  <div className="flex h-screen min-h-[430px] flex-col overflow-hidden bg-[#f0f0f0] font-['Noto_Sans',sans-serif] text-[7px] leading-[10px] text-[#222]">
    <header className="flex h-4 shrink-0 items-center gap-0.5 border-t border-[#999] bg-[#f1f0f1] pl-[3px] pr-2 font-['Open_Sans',sans-serif] text-[6px] text-[#888]">
      <AnsaLogo />
      <h1 className="flex-1">Challenge4_BMW M6.ansa - ANSA</h1>
      <svg viewBox="0 0 56 8" className="h-2 w-14" fill="none" stroke="#999">
        <path d="M0 4h5M25 1.500h5v5h-5zM50 1.500l5 5M55 1.500l-5 5" />
      </svg>
    </header>

    <div className="flex h-3 shrink-0 items-center bg-white pl-[3px] font-['Open_Sans',sans-serif]">
      <nav className="flex flex-1 gap-[6px]">
        {menus.map((m) => (
          <button key={m} type="button" className="whitespace-nowrap">
            {m}
          </button>
        ))}
      </nav>
      <label className="flex h-3 w-[247px] items-center border-b border-l border-[#bbb] bg-white pl-0.5 pr-1">
        <svg viewBox="0 0 8 8" className="size-[7px]" fill="none" stroke="#555">
          <circle cx="4.500" cy="3.500" r="2.500" />
          <path d="M3 5L.5 7.500" />
        </svg>
        <input aria-label="Search" placeholder="Search Functions and Filters" className="min-w-0 flex-1 outline-none placeholder:text-[#777]" />
        <svg viewBox="0 0 14 8" className="h-2 w-[14px]" fill="none" stroke="#777">
          <circle cx="4" cy="4" r="2.400" strokeWidth="1.600" strokeDasharray="1.500 .5" />
          <path d="M9 3l2 2 2-2" />
        </svg>
      </label>
    </div>

    <div className="flex h-[18px] shrink-0 items-center overflow-hidden pl-[3px]">
      <Tools names="folder >" />
      <Separator className="ml-0.5 mr-0.5" />
      <Tools names="sheet >" />
      <Separator className="ml-[5px] mr-0.5" />
      <Tools names="database blocks p m s >" />
      <Separator className="ml-[21px] mr-0.5" />
      <Tools names="mesh curve scale scroll people stack diamond check scatter tools >" />
      <Separator className="ml-3 mr-0.5" />
      <Tools names="boxOn prism >" />
      <Separator className="ml-[6px] mr-0.5" />
      <Tools names="undo v redo v wall wallCheck trash broom magnify camera split move ruler note threeD >" />
      <Separator className="ml-px mr-px" />
      <Tools names="clipboard >" />
      <Separator className="ml-[6px] mr-0.5" />
      <Tools names="points >" />
      <Separator className="mr-px" />
      <Tools names="*yellowSplit table v triangle v greenQuad v blueMesh >" />
    </div>

    <div className="flex min-h-0 flex-1">
      <div className="flex min-w-0 flex-1 flex-col">
        <main className="relative flex-1 overflow-hidden bg-linear-to-b from-[#02101f] to-[#354a5a]">
          <CarView />
          <p className="h-[11px] whitespace-pre font-['Liberation_Mono',monospace] text-[7px] leading-[11px] text-[#d5d9dd]">
            {"0:Challenge4_BMW M6.ansa,  Current Part: BMW M6"}
          </p>
          <ChecksManager />
        </main>
        <footer className="flex h-[13px] shrink-0 items-center">
          <span>CHECKS MANAGER&gt;Browser List</span>
          <svg viewBox="0 0 10 10" className="ml-[3px] size-[9px]" fill="none" stroke="#d0453c" strokeWidth="1.200">
            <circle cx="5" cy="5" r="4" />
            <path d="M3.500 3.500l3 3M6.500 3.500l-3 3" />
          </svg>
          <span className="ml-1.5 border-l border-[#ccc] pl-1.5">Select CONS,FACE</span>
        </footer>
      </div>
      <TopoPanel />
    </div>

    <div className="flex h-[49px] shrink-0 pt-px">
      <aside className="flex w-[13px] flex-col items-center justify-between bg-[#e2e2e2] py-1">
        <button type="button" aria-label="Close Info" className="size-[5px]">
          <svg viewBox="0 0 8 8" stroke="#222" strokeWidth="1.500">
            <path d="M1 1l6 6M7 1L1 7" />
          </svg>
        </button>
        <span className="rotate-180 [writing-mode:vertical-rl]">Info</span>
      </aside>
      <div className="ml-[3px] flex h-[46px] w-[81px] flex-col">
        <div className="flex min-h-0 flex-1">
          <pre className="w-[73px] overflow-hidden bg-white pl-px pt-px font-['Noto_Sans',sans-serif] leading-[9px]">{"DATE :20-OCT-2020\n\nChecks Manager: 6 te"}</pre>
          <div className="flex flex-1 items-end justify-center pb-2">
            <span className="h-[6px] w-[3px] bg-[#777]" />
          </div>
        </div>
        <div className="flex h-[9px] items-center justify-between pl-2.5 pr-px">
          <span className="h-0.5 w-2 bg-[#777]" />
          <Corners />
        </div>
      </div>
      <div className="flex min-w-0 flex-1 flex-col justify-between pb-1 pt-[3px]">
        <div className="flex h-4 items-center">
          <Separator className="ml-0.5 mr-0.5" />
          <Tools names="pick *ent pid v angle" />
          <span className="w-3 text-center text-[#777]">40°</span>
          <svg viewBox="0 0 6 10" className="h-[10px] w-[9px] fill-[#555]">
            <path d="M1 4l2-2 2 2zM1 6.500l2 2 2-2z" />
          </svg>
          <Tools names="pickBlue lasso *flashlight *v >" />
          <Separator className="mx-px" />
          <Tools names="dotPen dotPlus dotMinus dotNot quads quadsHalf lock v cross target turn" />
          <Separator className="ml-[46px] mr-0.5" />
          <Tools names="yellowCorner entPlate cubeBlue *cubeMesh meshBlue wireRed v rainbow v cubeGray v >" />
        </div>
        <div className="flex h-4 items-center">
          <span className="ml-[5px] mr-[9px]">
            <Chevron />
          </span>
          <Tools names="*pinkCube *pinkGrid *pinkMesh pinkPlus v *halfBox >" />
          <Separator className="ml-[30px] mr-px" />
          <Tools names="*plate *platePlus *plateDots *v *plateToggle *plateRed *plateSplit *v *plateBlue" />
          <Separator className="ml-[38px] mr-px" />
          <Tools names="*greenToggle greenBox greenBoxGrid greenBoxLine *greenDash pinkDash >" />
          <Separator className="ml-[45px] mr-px" />
          <Tools names="*arcToggle *pinBox *v *arc *v slant >" />
        </div>
      </div>
    </div>
  </div>
);

export default App;
